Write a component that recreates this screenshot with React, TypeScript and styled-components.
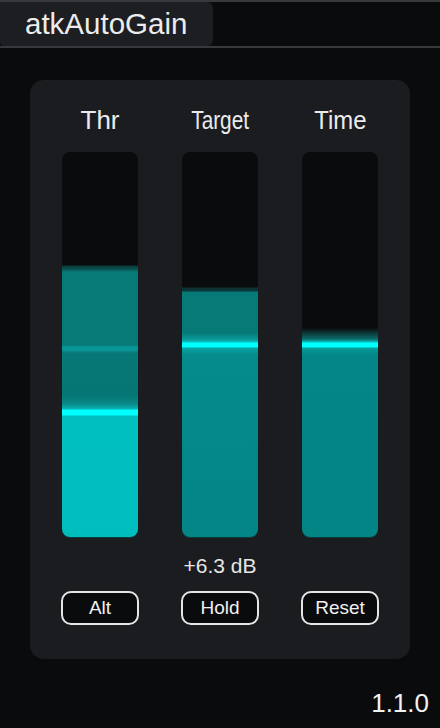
import React from "react";
import styled, { createGlobalStyle } from "styled-components";

const GlobalStyle = createGlobalStyle`
  html, body {
    margin: 0;
    padding: 0;
    background: #0a0b0d;
  }
  body {
    font-family: "Liberation Sans", Arial, sans-serif;
  }
`;

const Window = styled.div`
  width: 440px;
  height: 728px;
  background: #0a0b0d;
  display: flex;
  flex-direction: column;
  overflow: hidden;
`;

const Header = styled.div`
  height: 44px;
  border-top: 2px solid #38393c;
  border-bottom: 2px solid #38393c;
  display: flex;
`;

const Tab = styled.div`
  width: 213px;
  background: #1d1e21;
  border-radius: 0 6px 6px 4px;
  display: flex;
  align-items: center;
  padding-left: 25px;
  box-sizing: border-box;
  color: #ececec;
  font-size: 29.5px;
  line-height: 44px;
`;

const Panel = styled.div`
  margin: 32px 30px 0 30px;
  height: 579px;
  background: #1b1c20;
  border-radius: 14px;
  padding: 25px 10px 0 10px;
  box-sizing: border-box;
  display: grid;
  grid-template-columns: repeat(3, 120px);
`;

const Column = styled.div`
  display: flex;
  flex-direction: column;
  align-items: center;
`;

const Label = styled.div<{ $squeeze: number }>`
  height: 30px;
  line-height: 30px;
  font-size: 26px;
  color: #ebebeb;
  transform: scaleX(${(p) => p.$squeeze});
  white-space: nowrap;
`;

const Track = styled.div<{ $fill: string }>`
  margin-top: 17px;
  width: 76px;
  height: 385px;
  border-radius: 8px;
  background: ${(p) => p.$fill};
  box-shadow: 0 1px 0 #0c3b3b;
`;

const Readout = styled.div`
  margin-top: 17px;
  height: 24px;
  line-height: 24px;
  font-size: 21px;
  color: #e6e6e6;
`;

const Button = styled.div`
  margin-top: 13px;
  width: 78px;
  height: 34px;
  box-sizing: border-box;
  border: 2px solid #e6e6e6;
  border-radius: 10px;
  background: #0a0b0d;
  color: #f0f0f0;
  font-size: 19px;
  display: flex;
  align-items: center;
  justify-content: center;
`;

const Version = styled.div`
  margin-top: 29px;
  padding-right: 11px;
  text-align: right;
  font-size: 26px;
  line-height: 30px;
  color: #f2f2f2;
`;

const DARK = "#0a0b0d";

// gradient stops in px from the top of a 385px track
const thrFill = `linear-gradient(to bottom,
  ${DARK} 0px, ${DARK} 113px,
  #0c3a3a 114px, #0a4f4e 117px, #077a78 120px,
  #077a78 193px, #089696 195px, #089696 198px, #077876 201px,
  #067674 244px, #078a89 252px, #0bb4b4 257px,
  #00ffff 258px, #00ffff 263px,
  #00bfbf 264px, #00bebe 385px)`;

const targetFill = `linear-gradient(to bottom,
  ${DARK} 0px, ${DARK} 135px,
  #0d3434 136px, #0d3434 139px, #077a78 140px,
  #077a78 181px, #0a9d9c 188px, #0bc4c4 190px,
  #00ffff 191px, #00ffff 195px,
  #08a5a5 196px, #058b8b 203px, #048586 385px)`;

const timeFill = `linear-gradient(to bottom,
  ${DARK} 0px, ${DARK} 176px,
  #0c3838 181px, #0a6a6a 187px, #0bbcbc 190px,
  #00ffff 191px, #00ffff 195px,
  #069c9c 196px, #048686 203px, #048585 385px)`;

const meters = [
  { name: "Thr", squeeze: 1, fill: thrFill, readout: "", button: "Alt" },
  { name: "Target", squeeze: 0.8, fill: targetFill, readout: "+6.3 dB", button: "Hold" },
  { name: "Time", squeeze: 0.92, fill: timeFill, readout: "", button: "Reset" },
];

const App: React.FC = () => {
  return (
    <Window>
      <GlobalStyle />
      <Header>
        <Tab>atkAutoGain</Tab>
      </Header>
      <Panel>
        {meters.map((m) => (
          <Column key={m.name}>
            <Label $squeeze={m.squeeze}>{m.name}</Label>
            <Track $fill={m.fill} />
            <Readout>{m.readout}</Readout>
            <Button>{m.button}</Button>
          </Column>
        ))}
      </Panel>
      <Version>1.1.0</Version>
    </Window>
  );
};

export default App;
